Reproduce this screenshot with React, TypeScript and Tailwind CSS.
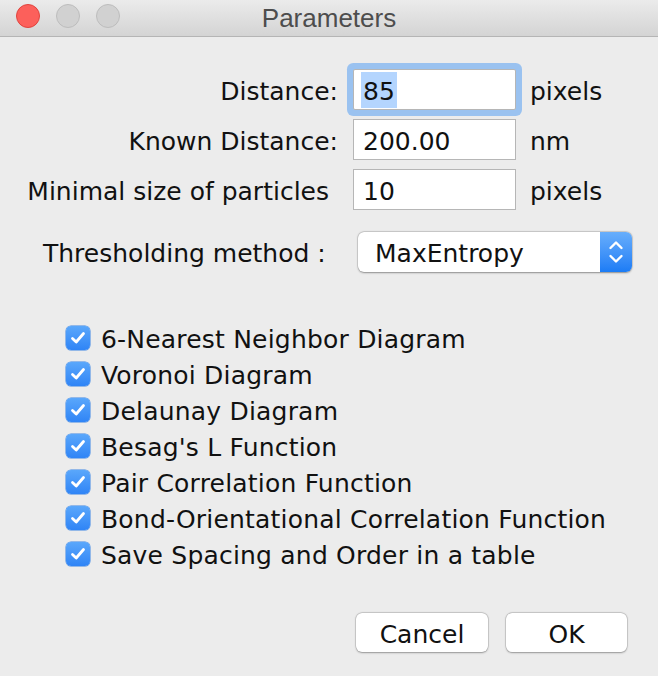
const fieldRows = [
  { label: "Distance:", value: "85", unit: "pixels", focused: true, pad: "" },
  { label: "Known Distance:", value: "200.00", unit: "nm", focused: false, pad: "" },
  { label: "Minimal size of particles", value: "10", unit: "pixels", focused: false, pad: "pr-[9px]" },
];

const options = [
  "6-Nearest Neighbor Diagram",
  "Voronoi Diagram",
  "Delaunay Diagram",
  "Besag's L Function",
  "Pair Correlation Function",
  "Bond-Orientational Correlation Function",
  "Save Spacing and Order in a table",
];

function Check() {
  return (
    <span className="flex h-[24px] w-[24px] items-center justify-center rounded-[5px] bg-gradient-to-b from-[#5aa7fb] to-[#2f84f6] shadow-[0_0_0_0.5px_#3a84e4]">
      <svg width="16" height="14" viewBox="0 0 16 14" fill="none">
        <path d="M2.5 7.5 L6.2 11 L13.5 2.5" stroke="white" strokeWidth="2.8" strokeLinecap="round" strokeLinejoin="round" />
      </svg>
    </span>
  );
}

export default function App() {
  return (
    <div className="flex h-[676px] w-[658px] flex-col overflow-hidden bg-[#ececec] font-['DejaVu_Sans',sans-serif] text-[25px] text-[#111]">
      <div className="grid h-[37px] grid-cols-[1fr_auto_1fr] border-b border-[#b5b5b5] bg-gradient-to-b from-[#ebebeb] to-[#d4d4d4]">
        <div className="flex gap-[16px] pl-[16px] pt-[4px]">
          <span className="h-[24px] w-[24px] rounded-full border border-[#e0443e] bg-[#fc605b]" />
          <span className="h-[24px] w-[24px] rounded-full border border-[#bdbdbd] bg-[#d1d1d1]" />
          <span className="h-[24px] w-[24px] rounded-full border border-[#bdbdbd] bg-[#d1d1d1]" />
        </div>
        <div className="pt-[2px] font-['Liberation_Sans',sans-serif] text-[26px] leading-[32px] text-[#4d4d4d]">Parameters</div>
        <div />
      </div>

      <div className="mt-[32px] flex flex-col gap-[9px]">
        {fieldRows.map((row) => (
          <div key={row.label} className="flex h-[41px] items-center">
            <div className={`w-[338px] pt-[3px] text-right leading-none ${row.pad}`}>{row.label}</div>
            <div
              className={`ml-[15px] flex h-[41px] w-[163px] items-center border border-[#b6b6b6] bg-white pl-[7px] ${
                row.focused ? "rounded-[2px] shadow-[0_0_0_6px_#9ac2f0]" : ""
              }`}
            >
              <span className={`px-[2px] pt-[3px] leading-[33px] ${row.focused ? "bg-[#b4d5fe]" : ""}`}>{row.value}</span>
            </div>
            <div className="ml-[14px] pt-[3px] leading-none">{row.unit}</div>
          </div>
        ))}
      </div>

      <div className="mt-[22px] flex h-[40px] items-center">
        <div className="w-[358px] pl-[43px] pt-[3px] leading-none">Thresholding method :</div>
        <div className="flex h-[40px] w-[274px] overflow-hidden rounded-[6px] bg-white shadow-[0_0.5px_2px_rgba(0,0,0,0.35),0_0_0_0.5px_rgba(0,0,0,0.15)]">
          <div className="flex flex-1 items-center pl-[17px] pt-[3px] leading-none">MaxEntropy</div>
          <div className="flex w-[32px] items-center justify-center bg-gradient-to-b from-[#67aefc] to-[#1b7cf5]">
            <svg width="18" height="28" viewBox="0 0 18 28" fill="none">
              <path d="M3.5 10 L9 4.5 L14.5 10" stroke="white" strokeWidth="2.4" strokeLinecap="round" strokeLinejoin="round" />
              <path d="M3.5 18 L9 23.5 L14.5 18" stroke="white" strokeWidth="2.4" strokeLinecap="round" strokeLinejoin="round" />
            </svg>
          </div>
        </div>
      </div>

      <div className="mt-[48px] flex flex-col pl-[66px]">
        {options.map((label) => (
          <label key={label} className="flex h-[36px] items-center gap-[11px] leading-none">
            <Check />
            <span className="pt-[3px] tracking-[0.2px]">{label}</span>
          </label>
        ))}
      </div>

      <div className="mt-[41px] flex gap-[18px] pl-[356px]">
        <button className="h-[39px] w-[132px] rounded-[6px] bg-white pt-[3px] leading-none shadow-[0_0.5px_2px_rgba(0,0,0,0.3),0_0_0_0.5px_rgba(0,0,0,0.18)]">
          Cancel
        </button>
        <button className="h-[39px] w-[121px] rounded-[6px] bg-white pt-[3px] leading-none shadow-[0_0.5px_2px_rgba(0,0,0,0.3),0_0_0_0.5px_rgba(0,0,0,0.18)]">
          OK
        </button>
      </div>
    </div>
  );
}
